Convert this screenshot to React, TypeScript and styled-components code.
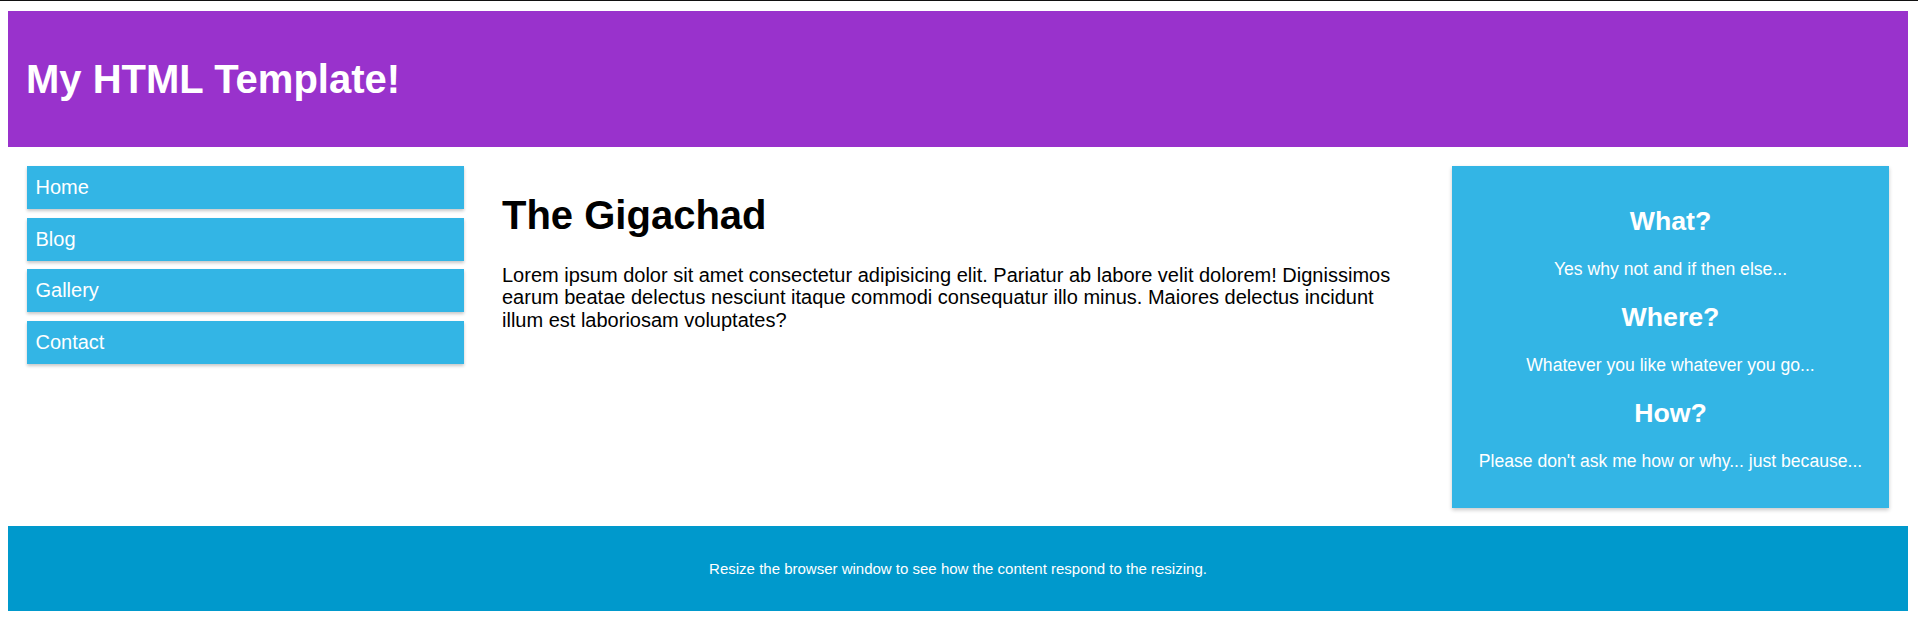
import React from "react";
import styled, { createGlobalStyle } from "styled-components";

const GlobalStyle = createGlobalStyle`
  html, body {
    margin: 0;
    padding: 0;
    background: #ffffff;
    font-family: "Liberation Sans", Arial, sans-serif;
  }
  * { box-sizing: border-box; }
`;

const TopEdge = styled.div`
  height: 1px;
  background: #111111;
`;

const Page = styled.div`
  display: flex;
  flex-direction: column;
  padding: 10px 10px 0 8px;
`;

const Header = styled.header`
  height: 136px;
  display: flex;
  align-items: center;
  padding: 0 18px;
  background: #9932cc;
`;

const SiteTitle = styled.h1`
  margin: 0;
  font-size: 40px;
  line-height: 45px;
  font-weight: 700;
  color: #ffffff;
`;

const ContentRow = styled.div`
  display: grid;
  grid-template-columns: 437px 1fr 437px;
  align-items: start;
  padding: 19px 19px 18px;
`;

const Nav = styled.nav`
  display: flex;
  flex-direction: column;
  gap: 8.7px;
`;

const NavItem = styled.a`
  height: 43px;
  display: flex;
  align-items: center;
  padding: 0 8.5px;
  background: #33b5e5;
  color: #ffffff;
  font-size: 20px;
  text-decoration: none;
  box-shadow: 0 2px 3px rgba(0, 0, 0, 0.22);
`;

const Main = styled.main`
  padding: 0 46px 0 38px;
  color: #000000;
`;

const Heading = styled.h1`
  margin: 27px 0 26px;
  font-size: 40px;
  line-height: 45px;
  font-weight: 700;
`;

const Paragraph = styled.p`
  margin: 0;
  font-size: 20px;
  line-height: 22.4px;
`;

const Aside = styled.aside`
  display: flex;
  flex-direction: column;
  gap: 23px;
  padding: 40px 19.5px 37px;
  background: #33b5e5;
  color: #ffffff;
  text-align: center;
  box-shadow: 0 2px 4px rgba(0, 0, 0, 0.22);
`;

const AsideTitle = styled.h2`
  margin: 0;
  font-size: 26.7px;
  line-height: 30px;
  font-weight: 700;
`;

const AsideText = styled.p`
  margin: 0;
  font-size: 17.6px;
  line-height: 20px;
`;

const Footer = styled.footer`
  height: 85px;
  display: flex;
  align-items: center;
  justify-content: center;
  background: #0099cc;
  color: #ffffff;
  font-size: 15px;
`;

const navLinks = ["Home", "Blog", "Gallery", "Contact"];

const faq = [
  { q: "What?", a: "Yes why not and if then else..." },
  { q: "Where?", a: "Whatever you like whatever you go..." },
  { q: "How?", a: "Please don't ask me how or why... just because..." },
];

export default function App() {
  return (
    <>
      <GlobalStyle />
      <TopEdge />
      <Page>
        <Header>
          <SiteTitle>My HTML Template!</SiteTitle>
        </Header>
        <ContentRow>
          <Nav>
            {navLinks.map((l) => (
              <NavItem key={l} href="#">
                {l}
              </NavItem>
            ))}
          </Nav>
          <Main>
            <Heading>The Gigachad</Heading>
            <Paragraph>
              Lorem ipsum dolor sit amet consectetur adipisicing elit. Pariatur ab labore velit
              dolorem! Dignissimos earum beatae delectus nesciunt itaque commodi consequatur illo
              minus. Maiores delectus incidunt illum est laboriosam voluptates?
            </Paragraph>
          </Main>
          <Aside>
            {faq.map((f) => (
              <React.Fragment key={f.q}>
                <AsideTitle>{f.q}</AsideTitle>
                <AsideText>{f.a}</AsideText>
              </React.Fragment>
            ))}
          </Aside>
        </ContentRow>
        <Footer>Resize the browser window to see how the content respond to the resizing.</Footer>
      </Page>
    </>
  );
}
